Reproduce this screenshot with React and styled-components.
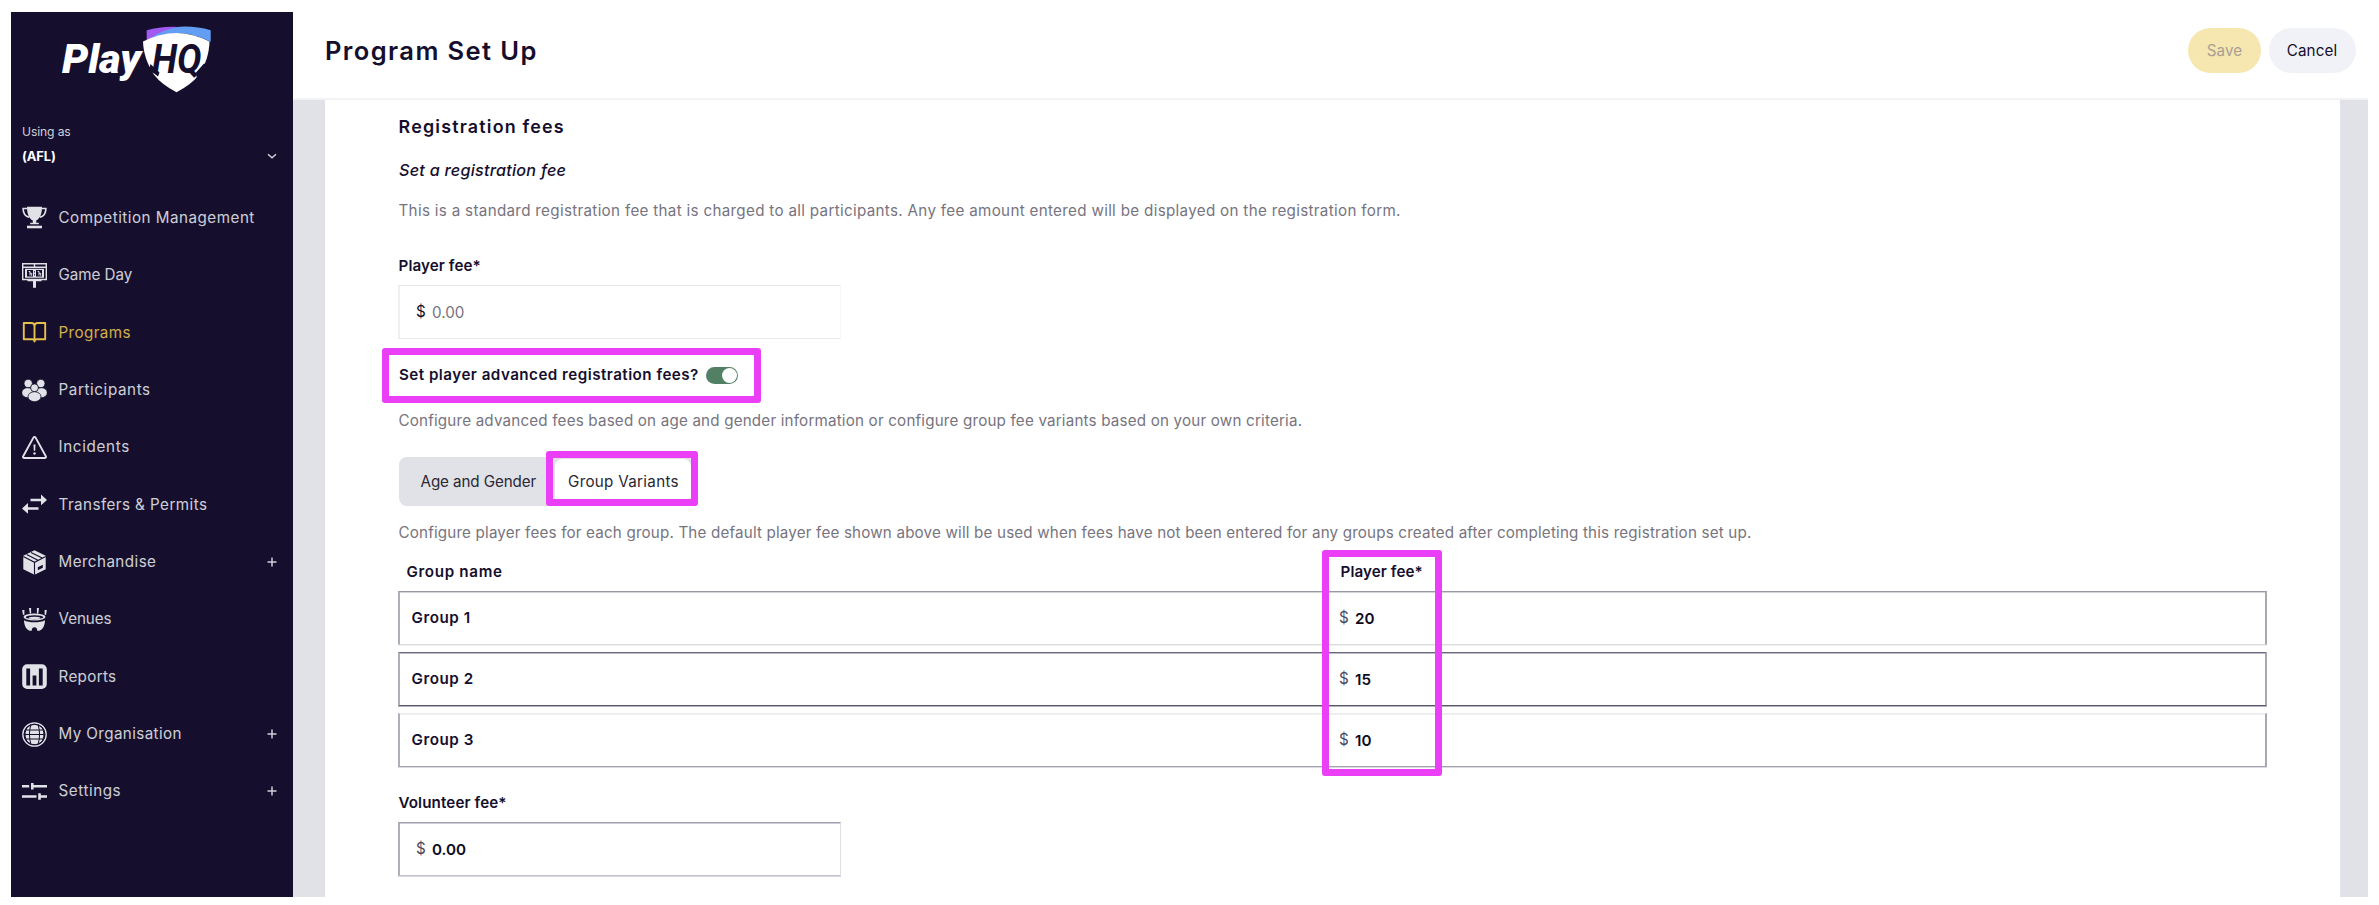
import React from "react";
import styled, { createGlobalStyle, css } from "styled-components";

const INK = "#150f2d";

const navItems = [
  { label: "Competition Management", icon: "trophy", track: 0.5 },
  { label: "Game Day", icon: "scoreboard", track: -0.06 },
  { label: "Programs", icon: "book", track: 0.41, active: true },
  { label: "Participants", icon: "people", track: 0.6 },
  { label: "Incidents", icon: "warning", track: 0.66 },
  { label: "Transfers & Permits", icon: "transfer", track: 0.44 },
  { label: "Merchandise", icon: "box", track: 0.44, more: true },
  { label: "Venues", icon: "stadium", track: -0.06 },
  { label: "Reports", icon: "chart", track: 0.33 },
  { label: "My Organisation", icon: "globe", track: 0.4, more: true },
  { label: "Settings", icon: "sliders", track: 0.56, more: true },
];

const groups = [
  { name: "Group 1", fee: "20", top: ["#9b99a8", "#d5d4da"], bottom: ["#dbdbe0", "#efeff2"] },
  { name: "Group 2", fee: "15", top: ["#6c697e", "#bcbac5"], bottom: ["#58546a", "#b5b3bf"] },
  { name: "Group 3", fee: "10", top: ["#ebebee", "#f1f1f3"], bottom: ["#a5a3b0", "#dbdae0"] },
];

const icons = {
  trophy: (
    <>
      <path d="M5 1.7h15c0 7.300-2 11.800-5.800 13.800v2.200h2.600v1.500H8.200v-1.500h2.600v-2.200C7 13.500 5 9 5 1.700z" />
      <path d="M5 20.700h15v2.600H5z" />
      <path
        d="M5.500 3.500H1.100c0 4.600 2 7.700 6 8.800M19.500 3.500h4.400c0 4.600-2 7.700-6 8.800"
        fill="none"
        stroke="currentColor"
        strokeWidth="1.6"
      />
    </>
  ),
  scoreboard: (
    <>
      <path
        d="M.7.700h23.600v15.800H.7zM.7 4.300h23.600M12.500.7v3.600"
        fill="none"
        stroke="currentColor"
        strokeWidth="1.400"
      />
      <path d="M3 5.800h19v9H3zM5.500 17h14v1.300h-14zM11 17h3v7.700h-3z" />
      <path d="M5 7h6v6.600H5zM14 7h6v6.600h-6zM12 8.200h1v1.300h-1zM12 11.200h1v1.300h-1z" fill={INK} />
      <path
        d="M6.600 8.500H8v4M8 10.300h1.700v2.500M15.600 8.500H17v4M17 10.300h1.700v2.500"
        fill="none"
        stroke="currentColor"
        strokeWidth="1"
      />
    </>
  ),
  book: (
    <path
      d="M1.800 3h7.400c1.900 0 3.300 1.200 3.300 3v15.500c0-1.300-.9-2.200-2.300-2.200H1.800zM23.200 3h-7.400c-1.900 0-3.300 1.200-3.300 3v15.500c0-1.300.9-2.200 2.300-2.200h8.400z"
      fill="none"
      stroke="currentColor"
      strokeWidth="1.9"
      strokeLinejoin="round"
    />
  ),
  people: (
    <g stroke={INK} strokeWidth=".8">
      <circle cx="6.200" cy="5.500" r="4.200" />
      <circle cx="18.800" cy="5.500" r="4.200" />
      <ellipse cx="5.600" cy="14.700" rx="5.900" ry="5" />
      <ellipse cx="19.400" cy="14.700" rx="5.900" ry="5" />
      <circle cx="12.500" cy="9.800" r="3.900" />
      <ellipse cx="12.500" cy="18.700" rx="6.500" ry="5" />
    </g>
  ),
  warning: (
    <>
      <path
        d="M11.400 2.600 1.200 21.300c-.5.900.1 1.700 1 1.700h20.600c.9 0 1.500-.8 1-1.700L13.600 2.600c-.5-.9-1.700-.9-2.200 0z"
        fill="none"
        stroke="currentColor"
        strokeWidth="1.900"
      />
      <path d="M11.500 9.500h2l-.3 6.200h-1.400z" />
      <circle cx="12.500" cy="18.500" r="1.200" />
    </>
  ),
  transfer: (
    <path d="M8.500 6.700H19V2.500l6 5.500-6 5.300V9.200H8.500zM16.500 15.200H6V11L0 16.500l6 5.300v-4.100h10.500z" />
  ),
  box: (
    <>
      <path d="M12.500.3 23.700 5.800v13.400L12.500 24.700 1.300 19.200V5.800z" />
      <path
        d="M1.300 6.600l11.200 5.700 11.200-5.700M12.500 12.300v12.500M4.700 4.600l11.200 5.700M9 2.400l11.200 5.700"
        fill="none"
        stroke={INK}
        strokeWidth="1.100"
      />
      <path d="M15.800 17.200l5-2.500v3.100l-5 2.500z" fill={INK} />
    </>
  ),
  stadium: (
    <>
      <path d="M.2 3h2.200v4.800H.9zM7 1h2.100v5.500H7.800zM14.900 1h2.100l-.7 5.500h-1.400zM22.600 3h2.200l-.7 4.800h-1.500z" />
      <ellipse cx="12.500" cy="10" rx="11" ry="3.400" />
      <ellipse cx="12.500" cy="10.200" rx="8.800" ry="2" fill={INK} />
      <ellipse cx="12.500" cy="10.900" rx="6" ry="1.200" />
      <path d="M2 13.200c5 2.800 16 2.800 21 0-.2 5.500-2 9-5.500 10.500h-2.200c-.2-2.300-1-3.400-2.800-3.400s-2.600 1.100-2.800 3.400H7.500C4 22.200 2.200 18.700 2 13.200z" />
    </>
  ),
  chart: (
    <>
      <rect x=".2" y=".3" width="24.600" height="24.600" rx="5" />
      <path d="M4.300 4.500h3.800v17H4.300zM10.600 11.500h3.800v10h-3.800zM16.900 4.500h3.800v17h-3.800z" fill={INK} />
    </>
  ),
  globe: (
    <>
      <circle cx="12.500" cy="12.500" r="9.800" />
      <circle cx="12.500" cy="12.500" r="11.600" fill="none" stroke="currentColor" strokeWidth="1.500" />
      <circle cx="12.500" cy="12.500" r="10.300" fill="none" stroke={INK} strokeWidth=".9" />
      <path
        d="M2.500 12.500h20M4 8h17M4 17h17M8.800 3C7 9 7 16 8.800 22M16.200 3c1.800 6 1.800 13 0 19M5 5c-2.500 5-2.500 10 0 15M20 5c2.500 5 2.500 10 0 15"
        fill="none"
        stroke={INK}
        strokeWidth="1"
      />
    </>
  ),
  sliders: (
    <path d="M0 6.100h7.200v2.400H0zM9 4h2.600v2.100H25v2.400H11.600v2.100H9zM0 16.300h14.500v2.400H0zM16.200 14.200h2.600v2.100H25v2.400h-6.200v2.100h-2.600z" />
  ),
};

const App = () => (
  <>
    <GlobalStyle />
    <Frame>
      <Sidebar>
        <Logo />
        <Account>
          <UsingAs>Using as</UsingAs>
          <AccountName>
            (AFL)
            <Marker viewBox="0 0 10 10">
              <path d="M1 3.200l4 3.600 4-3.600" />
            </Marker>
          </AccountName>
        </Account>
        <nav>
          {navItems.map((item) => (
            <NavItem key={item.label} $active={item.active}>
              <NavIcon viewBox="0 0 25 25">{icons[item.icon]}</NavIcon>
              <NavLabel $track={item.track}>{item.label}</NavLabel>
              {item.more && (
                <Marker viewBox="0 0 10 10">
                  <path d="M.5 5h9M5 .5v9" />
                </Marker>
              )}
            </NavItem>
          ))}
        </nav>
      </Sidebar>

      <Main>
        <Header>
          <Title>Program Set Up</Title>
          <Actions>
            <SaveButton>Save</SaveButton>
            <CancelButton>Cancel</CancelButton>
          </Actions>
        </Header>
        <Body>
          <Card>
            <SectionTitle>Registration fees</SectionTitle>
            <SubTitle>Set a registration fee</SubTitle>
            <Description $gap={16} $track={0.31}>
              This is a standard registration fee that is charged to all
              participants. Any fee amount entered will be displayed on the
              registration form.
            </Description>

            <Label $gap={31} $track={0.08}>
              Player fee*
            </Label>
            <MoneyField $light>
              <Dollar $dark>$</Dollar>
              <Amount placeholder="0.00" />
            </MoneyField>

            <ToggleRow>
              <ToggleLabel>Set player advanced registration fees?</ToggleLabel>
              <Toggle />
              <Highlight $top={-15} $left={-16} $width={379} $height={55} />
            </ToggleRow>
            <Description $gap={22} $track={0.18}>
              Configure advanced fees based on age and gender information or
              configure group fee variants based on your own criteria.
            </Description>

            <Segments>
              <Segment $width={155} $pad={20.5} $track={-0.1}>
                Age and Gender
              </Segment>
              <Segment $width={136} $pad={13} $track={0.3} $selected>
                Group Variants
                <Highlight $top={-8} $left={-9} $width={152} $height={55} />
              </Segment>
            </Segments>
            <Description $gap={15} $track={0.17}>
              Configure player fees for each group. The default player fee shown
              above will be used when fees have not been entered for any groups
              created after completing this registration set up.
            </Description>

            <TableHead>
              <HeadCell $pad={8.5} $track={0.65}>
                Group name
              </HeadCell>
              <HeadCell $pad={1.5} $track={0.08}>
                Player fee*
                <Highlight $top={-10} $left={-17} $width={120} $height={226} />
              </HeadCell>
            </TableHead>
            <Rows>
              {groups.map((group) => (
                <Row key={group.name} $top={group.top} $bottom={group.bottom}>
                  <GroupName>{group.name}</GroupName>
                  <Fee>
                    <Dollar>$</Dollar>
                    <Amount defaultValue={group.fee} />
                  </Fee>
                </Row>
              ))}
            </Rows>

            <Label $gap={24} $track={0.1}>
              Volunteer fee*
            </Label>
            <MoneyField>
              <Dollar>$</Dollar>
              <Amount defaultValue="0.00" />
            </MoneyField>
          </Card>
        </Body>
      </Main>
    </Frame>
  </>
);

const Logo = () => (
  <LogoSvg viewBox="60 22 154 74">
    <path d="M146.700 30.300q15-4.500 33-3.300l-6 8-27 6.500z" fill="#a259f0" />
    <path d="M147 40.500q15-11.500 33-13.800 16-.8 30.700 3.600v11.500q-33-17-63.700-1.300z" fill="#629ff4" />
    <path
      d="M143 41.600q33.500-17.200 66.500 0c-.4 12-3.500 22-10.500 33.200q-8 10.200-22.500 17.400-14.500-7.200-22.500-17.400C147 63.600 143.500 53.600 143 41.600z"
      fill="#fff"
    />
    <path d="M150.500 64l9 8.500-1.500 4-9-7zM196 72.500l8-9 4 2-11 13.500z" fill={INK} />
    <LogoText x="62" y="72.500" textLength="79" lengthAdjust="spacingAndGlyphs" fill="#fff">
      Play
    </LogoText>
    <LogoText $bold x="152" y="72.500" textLength="49.500" lengthAdjust="spacingAndGlyphs" fill={INK}>
      HQ
    </LogoText>
  </LogoSvg>
);

const GlobalStyle = createGlobalStyle`
  * {
    box-sizing: border-box;
  }

  body {
    margin: 0;
    background-color: #fff;
    color: ${INK};
    font-family: Inter, "Liberation Sans", sans-serif;
    font-size: 15.2px;
    line-height: 24px;
  }
`;

const tracked = css`
  letter-spacing: ${({ $track }) => $track || 0}px;
  white-space: nowrap;
`;

const Frame = styled.div`
  display: flex;
  height: 905px;
  padding: 12px 11px 8px;
`;

const Sidebar = styled.aside`
  width: 282px;
  flex-shrink: 0;
  background-color: ${INK};
  color: #cfcfd7;
`;

const LogoSvg = styled.svg`
  display: block;
  width: 154px;
  height: 74px;
  margin: 10px 0 0 49px;
`;

const LogoText = styled.text`
  font-family: Roboto, sans-serif;
  font-size: 41px;
  font-style: italic;
  font-weight: ${({ $bold }) => ($bold ? 700 : 900)};
`;

const Account = styled.div`
  height: 93.3px;
  padding: 24px 16px 0 11px;
  font-size: 12.1px;
`;

const UsingAs = styled.div`
  letter-spacing: -0.1px;
`;

const AccountName = styled.div`
  display: flex;
  align-items: center;
  justify-content: space-between;
  color: #fff;
  font-size: 13px;
  font-weight: 700;
  letter-spacing: -0.15px;
`;

const Marker = styled.svg`
  width: 10px;
  height: 10px;
  margin-left: auto;
  fill: none;
  stroke: #cfcfd7;
  stroke-width: 1.5;
`;

const NavItem = styled.a`
  display: flex;
  align-items: center;
  height: 57.35px;
  padding: 0 16px 0 11px;
  color: ${({ $active }) => ($active ? "#e6c04c" : "#e1e2e7")};
  cursor: pointer;
`;

const NavIcon = styled.svg`
  width: 25px;
  height: 25px;
  margin-right: 11.5px;
  fill: currentColor;
`;

const NavLabel = styled.span`
  ${tracked}
  opacity: 0.9;
`;

const Main = styled.main`
  display: flex;
  flex: 1;
  flex-direction: column;
`;

const Header = styled.header`
  display: flex;
  align-items: center;
  justify-content: space-between;
  height: 88px;
  padding: 0 12.5px 9px 32px;
  border-bottom: 2px solid #f3f3f6;
`;

const Title = styled.h1`
  margin: 0;
  font-size: 25.5px;
  font-weight: 600;
  letter-spacing: 1.4px;
`;

const Actions = styled.div`
  display: flex;
  gap: 7.5px;
`;

const Button = styled.button`
  height: 45px;
  padding: 0;
  border: none;
  border-radius: 23px;
  font-family: inherit;
  font-size: 15.2px;
  letter-spacing: 0.1px;
  cursor: pointer;
`;

const SaveButton = styled(Button)`
  width: 73px;
  background-color: #f6e7b0;
  color: #a8a095;
`;

const CancelButton = styled(Button)`
  width: 87px;
  background-color: #f1f2f7;
  color: ${INK};
`;

const Body = styled.div`
  display: flex;
  flex: 1;
  padding: 0 28px 0 32px;
  background-color: #e1e2e7;
`;

const Card = styled.section`
  flex: 1;
  padding: 12px 73px 0;
  background-color: #fff;
`;

const SectionTitle = styled.h2`
  margin: 0 0 0 0.5px;
  font-size: 17.9px;
  font-weight: 600;
  letter-spacing: 1.19px;
  line-height: 30px;
`;

const SubTitle = styled.h3`
  margin: 15px 0 0 1px;
  font-size: 16.2px;
  font-style: italic;
  font-weight: 500;
  letter-spacing: 0.25px;
  line-height: 26px;
`;

const Description = styled.p`
  ${tracked}
  margin: ${({ $gap }) => $gap}px 0 0 0.5px;
  color: #777480;
`;

const Label = styled.label`
  ${tracked}
  display: block;
  margin-top: ${({ $gap }) => $gap}px;
  padding-left: 0.5px;
  font-weight: 600;
`;

const MoneyField = styled.div`
  display: flex;
  align-items: center;
  width: 443px;
  height: 54px;
  margin-top: 7px;
  padding-left: 16px;
  border: solid ${({ $light }) => ($light ? "#e6e6ea" : "#a19fad")};
  border-width: 1px 1px 1px 2px;
  border-left-color: ${({ $light }) => ($light ? "#f0f0f3" : "#b0aebb")};
  border-right-color: ${({ $light }) => ($light ? "#f7f7f9" : "#dfdfe4")};
  border-bottom-color: ${({ $light }) => ($light ? "#e9e9ed" : "#c5c4cc")};
  box-shadow: ${({ $light }) =>
    $light ? "none" : "inset 0 1px #cdccd4, 0 1px #d9d8de"};
`;

const Dollar = styled.span`
  width: 16px;
  color: ${({ $dark }) => ($dark ? INK : "#4b475c")};
`;

const Amount = styled.input`
  width: 200px;
  padding: 0;
  border: none;
  outline: none;
  background: none;
  color: #0e0b1c;
  font-family: inherit;
  font-size: 15.2px;
  font-weight: 600;
  letter-spacing: 0;

  &::placeholder {
    color: #777480;
    font-weight: 400;
  }
`;

const Highlight = styled.span`
  position: absolute;
  top: ${({ $top }) => $top}px;
  left: ${({ $left }) => $left}px;
  width: ${({ $width }) => $width}px;
  height: ${({ $height }) => $height}px;
  border: 7.5px solid #ea3ff7;
  border-radius: 3px;
  pointer-events: none;
`;

const ToggleRow = styled.div`
  position: relative;
  display: flex;
  align-items: center;
  margin-top: 24px;
`;

const ToggleLabel = styled.span`
  width: 308px;
  padding-left: 1px;
  font-weight: 600;
  letter-spacing: 0.47px;
  white-space: nowrap;
`;

const Toggle = styled.span`
  width: 32px;
  height: 17px;
  padding: 1px;
  border-radius: 9px;
  background-color: #528064;

  &::after {
    content: "";
    display: block;
    width: 15px;
    height: 15px;
    margin-left: auto;
    border-radius: 50%;
    background-color: #fff;
  }
`;

const Segments = styled.div`
  display: flex;
  width: 295px;
  height: 49px;
  margin: 24px 0 0 1px;
  padding: 2px 1px;
  border-radius: 8px;
  background-color: #e1e2e7;
`;

const Segment = styled.div`
  ${tracked}
  position: relative;
  width: ${({ $width }) => $width}px;
  padding-left: ${({ $pad }) => $pad}px;
  border-radius: 8px;
  background-color: ${({ $selected }) => ($selected ? "#fff" : "transparent")};
  color: #2a2833;
  line-height: 45px;
`;

const TableHead = styled.div`
  display: grid;
  grid-template-columns: 941px 1fr;
  margin-top: 15px;
`;

const HeadCell = styled.div`
  ${tracked}
  position: relative;
  padding-left: ${({ $pad }) => $pad}px;
  font-weight: 600;
`;

const Rows = styled.div`
  display: flex;
  flex-direction: column;
  gap: 7px;
  margin-top: 7px;
`;

const Row = styled.div`
  display: grid;
  grid-template-columns: 939px 1fr;
  align-items: center;
  height: 54px;
  border-top: 1px solid ${({ $top }) => $top[0]};
  border-bottom: 1px solid ${({ $bottom }) => $bottom[0]};
  border-left: 2px solid #b0aebb;
  border-right: 2px solid #a9a7b4;
  box-shadow: inset 0 1px ${({ $top }) => $top[1]},
    0 1px ${({ $bottom }) => $bottom[1]};
`;

const GroupName = styled.span`
  padding-left: 11.5px;
  font-weight: 600;
  letter-spacing: 0.55px;
`;

const Fee = styled.span`
  display: flex;
  align-items: center;
`;

export default App;
